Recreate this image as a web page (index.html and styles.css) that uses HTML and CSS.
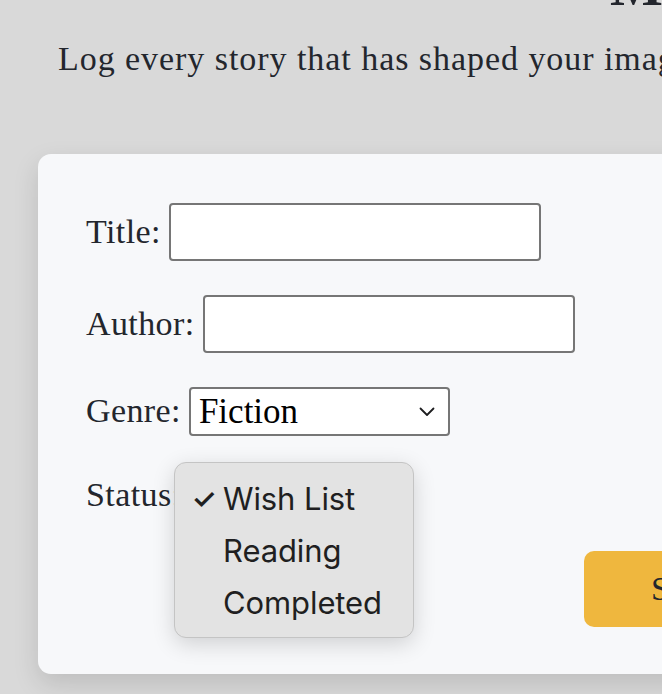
FILE: index.html
```html
<!DOCTYPE html>
<html lang="en">
<head>
<meta charset="utf-8">
<title>Book Log</title>
<link rel="stylesheet" href="styles.css">
</head>
<body>
<div class="page">
  <h1 class="title">My Reading Hub</h1>
  <p class="subtitle">Log every story that has shaped your imagination, one book at a time.</p>
  <form class="card">
    <div class="row">
      <label class="label" for="t">Title:</label>
      <input class="field" id="t" type="text">
    </div>
    <div class="row">
      <label class="label" for="a">Author:</label>
      <input class="field" id="a" type="text">
    </div>
    <div class="row">
      <label class="label" for="g">Genre:</label>
      <span class="select-wrap">
        <select class="select" id="g"><option>Fiction</option></select>
        <svg class="chev" width="16" height="10" viewBox="0 0 16 10"><path d="M1.5 1.5 L8 8 L14.5 1.5" fill="none" stroke="#1d1d1f" stroke-width="1.8" stroke-linecap="round" stroke-linejoin="round"/></svg>
      </span>
    </div>
    <div class="row status-row">
      <label class="label" for="s">Status:</label>
      <span class="select-wrap">
        <select class="select select-small" id="s"><option>Wish List</option></select>
      </span>
      <div class="menu">
        <div class="item"><span class="check">✓</span>Wish List</div>
        <div class="item"><span class="check"></span>Reading</div>
        <div class="item"><span class="check"></span>Completed</div>
      </div>
    </div>
    <div class="actions">
      <button class="btn" type="button">Save Book</button>
    </div>
  </form>
</div>
</body>
</html>
```
FILE: styles.css
```css
html, body {
  margin: 0;
  padding: 0;
}
body {
  background: #d9d9d9;
  overflow: hidden;
  width: 662px;
  height: 694px;
  font-family: "Liberation Serif", "DejaVu Serif", serif;
  color: #23262d;
}
.page {
  width: 1200px;
  padding-left: 38px;
}
.title {
  margin: -42px 0 0 572px;
  font-size: 56px;
  line-height: 1;
  font-weight: 700;
  white-space: nowrap;
}
.subtitle {
  margin: 25px 0 0 20px;
  font-size: 34px;
  letter-spacing: 0.95px;
  line-height: 1.2;
  white-space: nowrap;
}
.card {
  margin-top: 74px;
  width: 900px;
  background: #f7f8fa;
  border-radius: 13px;
  box-shadow: 0 10px 26px rgba(0, 0, 0, 0.13);
  padding: 49px 48px 47px 48px;
  display: flex;
  flex-direction: column;
  gap: 34px;
}
.row {
  display: flex;
  align-items: center;
  gap: 8px;
  position: relative;
}
.label {
  font-size: 34px;
  letter-spacing: 0.4px;
  line-height: 1;
}
.field {
  width: 372px;
  height: 58px;
  box-sizing: border-box;
  border: 2px solid #767676;
  border-radius: 4px;
  background: #fff;
  margin: 0;
  font-size: 30px;
}
.select-wrap {
  position: relative;
  display: inline-block;
}
.select {
  appearance: none;
  -webkit-appearance: none;
  width: 261px;
  height: 49px;
  box-sizing: border-box;
  border: 2px solid #767676;
  border-radius: 4px;
  background: #fff;
  margin: 0;
  padding: 0 0 0 8px;
  font-family: "Liberation Serif", "DejaVu Serif", serif;
  font-size: 35px;
  color: #000;
}
.select-small {
  width: 200px;
}
.chev {
  position: absolute;
  right: 15px;
  top: 20px;
}
.status-row .label {
  margin-top: 2px;
}
.menu {
  position: absolute;
  left: 88px;
  top: -8px;
  width: 240px;
  height: 176px;
  box-sizing: border-box;
  background: #e3e3e3;
  border: 1px solid #c4c4c4;
  border-radius: 12px;
  box-shadow: 0 6px 22px rgba(0, 0, 0, 0.16);
  padding-top: 10px;
  font-family: Inter, "Noto Sans", sans-serif;
  color: #1f1f21;
  z-index: 2;
}
.item {
  display: flex;
  align-items: center;
  height: 52px;
  font-size: 31px;
  letter-spacing: -0.1px;
}
.check {
  width: 48px;
  text-align: right;
  padding-right: 7px;
  box-sizing: border-box;
  font-size: 28px;
  font-weight: 600;
}
.actions {
  display: flex;
  padding-left: 498px;
  margin-top: -2px;
}
.btn {
  height: 76px;
  border: none;
  border-radius: 10px;
  background: #efb73e;
  color: #23262d;
  font-family: "Liberation Serif", "DejaVu Serif", serif;
  font-size: 34px;
  padding: 0 60px 0 67px;
  text-align: left;
}
```
